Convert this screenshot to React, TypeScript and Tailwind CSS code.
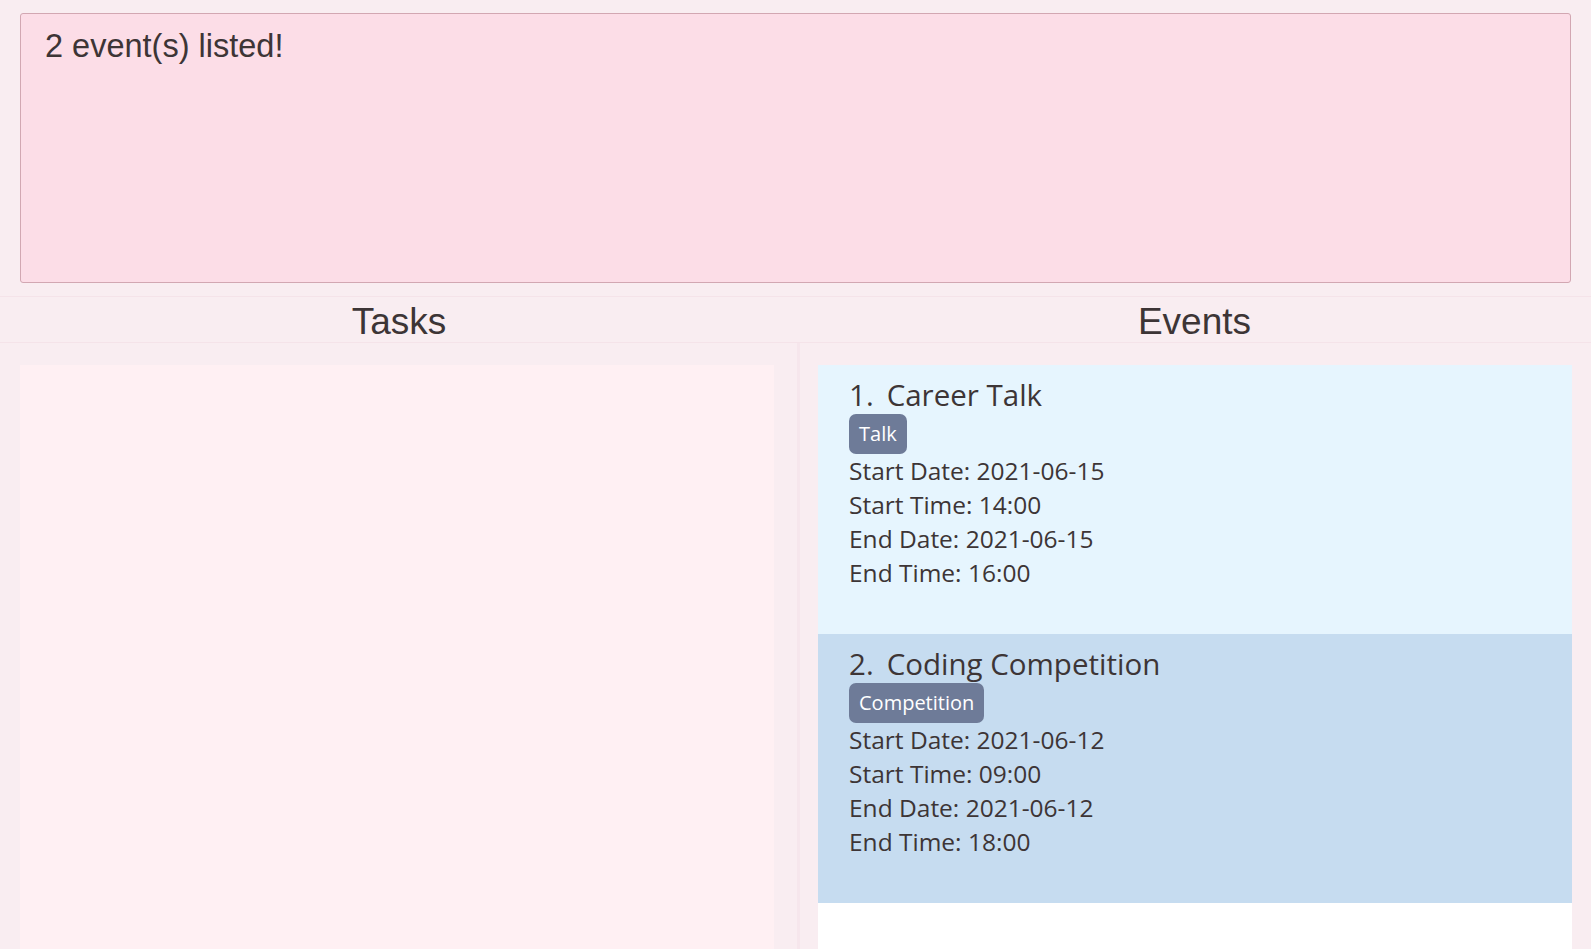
type EventItem = {
  name: string;
  tag: string;
  startDate: string;
  startTime: string;
  endDate: string;
  endTime: string;
};

const events: EventItem[] = [
  {
    name: "Career Talk",
    tag: "Talk",
    startDate: "2021-06-15",
    startTime: "14:00",
    endDate: "2021-06-15",
    endTime: "16:00",
  },
  {
    name: "Coding Competition",
    tag: "Competition",
    startDate: "2021-06-12",
    startTime: "09:00",
    endDate: "2021-06-12",
    endTime: "18:00",
  },
];

const EventCard = ({ index, event }: { index: number; event: EventItem }) => {
  const bg = index % 2 === 0 ? "bg-[#e6f5fe]" : "bg-[#c6dcf0]";
  return (
    <div className={`${bg} h-[269px] pl-[31px] pt-[11px] text-[#3d3536] font-['Open_Sans',sans-serif]`}>
      <div className="flex items-baseline text-[29.5px] leading-[38px]">
        <span>{index + 1}.</span>
        <span className="ml-[13px]">{event.name}</span>
      </div>
      <div>
        <span className="inline-block rounded-[7px] bg-[#6e7b98] px-[10px] text-[20px] leading-[40px] text-white">
          {event.tag}
        </span>
      </div>
      <div className="text-[24.5px] leading-[34px]">
        <div>Start Date: {event.startDate}</div>
        <div>Start Time: {event.startTime}</div>
        <div>End Date: {event.endDate}</div>
        <div>End Time: {event.endTime}</div>
      </div>
    </div>
  );
};

export default function App() {
  return (
    <div className="flex h-[949px] w-[1591px] flex-col overflow-hidden bg-[#f9edf1] font-['Liberation_Sans',Arial,sans-serif] text-[#3d3536]">
      <div className="h-[296px] shrink-0 px-[20px] pt-[13px]">
        <div className="h-[270px] rounded-[3px] border border-[#d2a7b2] bg-[#fcdde7] px-[24px] pt-[12px]">
          <p className="text-[32.5px] leading-[40px]">2 event(s) listed!</p>
        </div>
      </div>
      <div className="flex h-[47px] shrink-0 border-y border-[#f5e3e9] pt-[5px] text-[37px]">
        <div className="flex w-[798px] items-center justify-center">Tasks</div>
        <div className="flex flex-1 items-center justify-center">Events</div>
      </div>
      <div className="flex min-h-0 flex-1">
        <div className="w-[800px] border-r-[3px] border-[#f6e6ec] pl-[20px] pr-[23px] pt-[22px]">
          <div className="h-full bg-[#fff0f3]" />
        </div>
        <div className="flex-1 pl-[18px] pr-[19px] pt-[22px]">
          <div className="h-full bg-white">
            {events.map((e, i) => (
              <EventCard key={e.name} index={i} event={e} />
            ))}
          </div>
        </div>
      </div>
    </div>
  );
}
